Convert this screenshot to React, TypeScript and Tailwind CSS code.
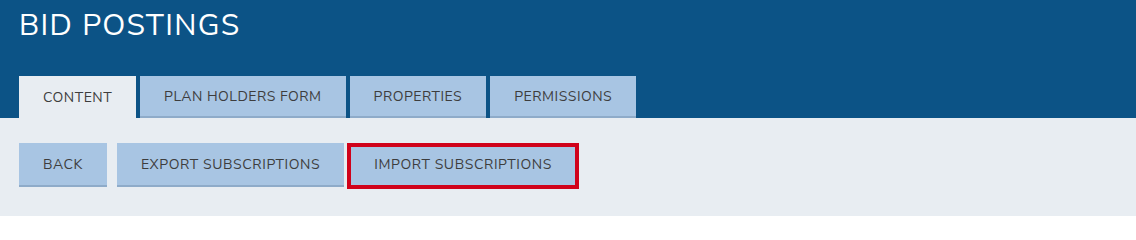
import React from "react";

const font = { fontFamily: '"Nunito Sans", "Open Sans", "Liberation Sans", sans-serif' };

export default function App() {
  const tabs = ["CONTENT", "PLAN HOLDERS FORM", "PROPERTIES", "PERMISSIONS"];
  return (
    <div className="w-[1136px] h-[216px] bg-[#e8edf2]" style={font}>
      <div className="bg-[#0c5386] px-[19px]">
        <h1 className="h-[76px] pt-[9px] text-[30px] leading-[34px] tracking-[1.3px] text-white font-normal">
          BID POSTINGS
        </h1>
        <div className="flex gap-1 h-[42px]">
          {tabs.map((t, i) =>
            i === 0 ? (
              <div
                key={t}
                className="flex items-center px-6 bg-[#e8edf2] text-[14px] tracking-[0.5px] text-[#3d3d3d]"
              >
                {t}
              </div>
            ) : (
              <div
                key={t}
                className="flex items-center px-6 bg-[#a8c5e3] border-b-2 border-[#8eabc9] text-[14px] tracking-[0.5px] text-[#3d3d3d]"
              >
                {t}
              </div>
            )
          )}
        </div>
      </div>
      <div className="flex items-start px-[19px] pt-[25px]">
        <button className="h-[44px] px-6 bg-[#a8c5e3] border-b-2 border-[#8eabc9] text-[14px] tracking-[0.6px] text-[#3d3d3d]">
          BACK
        </button>
        <button className="ml-[10px] h-[44px] px-6 bg-[#a8c5e3] border-b-2 border-[#8eabc9] text-[14px] tracking-[0.6px] text-[#3d3d3d]">
          EXPORT SUBSCRIPTIONS
        </button>
        <button className="ml-[3px] h-[46px] px-[23px] pb-[3px] bg-[#a8c5e3] border-4 border-[#d0021b] text-[14px] tracking-[0.6px] text-[#3d3d3d]">
          IMPORT SUBSCRIPTIONS
        </button>
      </div>
    </div>
  );
}
